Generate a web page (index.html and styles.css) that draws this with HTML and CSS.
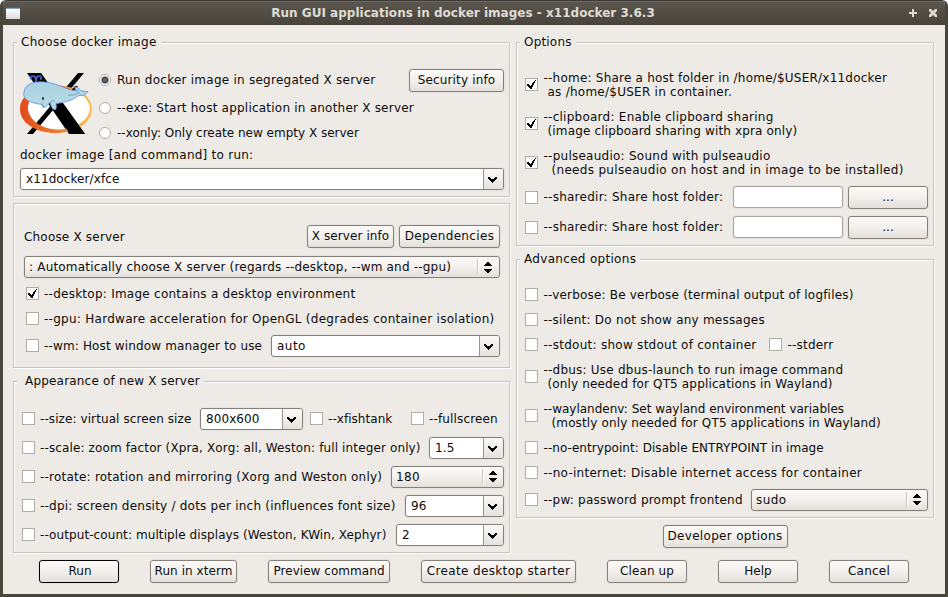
FILE: index.html
```html
<!DOCTYPE html>
<html lang="en">
<head>
<meta charset="utf-8">
<title>Run GUI applications in docker images - x11docker 3.6.3</title>
<link rel="stylesheet" href="styles.css">
</head>
<body>
<svg class="defs" aria-hidden="true">
  <symbol id="down" viewBox="0 0 9 6"><path d="M0 0h2v1h1v1h3V1h1V0h2v2H8v1H7v1H6v1H5v1H4V5H3V4H2V3H1V2H0z"/></symbol>
  <symbol id="updown" viewBox="0 0 8 11"><path d="M3 0h2v1h1v1h1v1h1v1H0V3h1V2h1V1h1zM0 7h8v1H7v1H6v1H5v1H3v-1H2V9H1V8H0z"/></symbol>
  <symbol id="tick" viewBox="0 0 9 9"><path d="M0 4h2v1h1v1h1V5h1V3h1V2h1V1h1V0h1v1H8v2H7v2H6v2H5v2H3V8H2V7H1V6H0z"/></symbol>
</svg>
<div class="window">
  <header class="titlebar">
    <span class="app-icon"></span>
    <h1 class="title">Run GUI applications in docker images - x11docker 3.6.3</h1>
    <svg class="win-btn" viewBox="0 0 8 8"><path d="M3 0h2v3h3v2H5v3H3V5H0V3h3z"/></svg>
    <svg class="win-btn" viewBox="0 0 8 8"><path d="M0 0h2l2 2 2-2h2v2L6 4l2 2v2H6L4 6 2 8H0V6l2-2-2-2z"/></svg>
  </header>
  <main class="columns">
    <div class="col-left">
      <section class="group g-image">
        <h2 class="legend t30">Choose docker image</h2>
        <div class="image-row">
          <svg class="logo" viewBox="0 0 72 64">
            <defs>
              <linearGradient id="ring" x1="0" x2="1"><stop offset="0" stop-color="#e2491b"/><stop offset=".5" stop-color="#ee7a2c"/><stop offset="1" stop-color="#fcc04f"/></linearGradient>
              <linearGradient id="skin" x1="0" x2="0" y1="0" y2="1"><stop offset="0" stop-color="#a9d1e2"/><stop offset="1" stop-color="#b9dde3"/></linearGradient>
            </defs>
            <ellipse cx="38" cy="36.500" rx="31" ry="21.500" fill="#fff"/>
            <path d="M7 1h14l44 61H49z"/>
            <path d="M58 1h6L13 62H7z"/>
            <path fill="url(#ring)" fill-rule="evenodd" d="M36 13.500c20 0 36 10 36 23.500S56 61 36 61 0 51 0 37s16-23.500 36-23.500zm2 2C21 15.500 8 25 8 36s13 21.500 30 21.500S70 48 70 36.500 55 15.500 38 15.500z"/>
            <path d="M38 31h5l22 31H50L34 39z"/>
            <path d="M48 22l7-8h3l-7 9z"/>
            <path fill="url(#skin)" stroke="#7195e9" stroke-width=".9" d="M4 20C5 11 16 8.500 28 10.500c11 1.500 19 8 30 8.500-1-1-4-2-3-4 3 0 5 3 7 4l6 .500c-2 3-5 4.500-9 4-7 5-14 7-23 8 0 2 1 5-1 6.500-3-1-4-4-5-7.500-2 1-3 5-7 5-1-1-1-2-1-3C11 31 2 28 4 20z"/>
            <path fill="none" stroke="#548caf" stroke-width=".7" d="M30 31c1-2 3-3 5-2M22 31l2 4M48 23c5 1 9-1 12-3"/>
            <path fill="none" stroke="#4c66dc" stroke-width="1.700" d="M16 10c0-4-1-6-3-6-3 0-3 3-1 3.500M16 10c0-4 1-6 3-6 3 0 3 3 1 3.500"/>
            <ellipse cx="23" cy="26.500" rx="1" ry="1.700" fill="#243c50"/>
          </svg>
          <div class="radios">
            <label class="radio"><i class="dot on"></i><span class="t25">Run docker image in segregated X server</span></label>
            <label class="radio"><i class="dot"></i><span class="t22">--exe: Start host application in another X server</span></label>
            <label class="radio r3"><i class="dot"></i><span class="t00">--xonly: Only create new empty X server</span></label>
          </div>
          <button class="btn w95 t15">Security info</button>
        </div>
        <div class="run-label"><span class="t25">docker image [and command] to run:</span></div>
        <div class="combo"><span class="t10">x11docker/xfce</span><b><svg><use href="#down"/></svg></b></div>
      </section>

      <section class="group g-server">
        <div class="server-row">
          <span class="grow t20">Choose X server</span>
          <button class="btn w87 t10">X server info</button>
          <button class="btn w101 t35">Dependencies</button>
        </div>
        <div class="select server"><span class="t20">: Automatically choose X server (regards --desktop, --wm and --gpu)</span><b><svg><use href="#updown"/></svg></b></div>
        <div class="opt h25"><i class="box"><svg><use href="#tick"/></svg></i><span class="grow t25">--desktop: Image contains a desktop environment</span></div>
        <div class="opt h25"><i class="box"></i><span class="grow t27">--gpu: Hardware acceleration for OpenGL (degrades container isolation)</span></div>
        <div class="opt h29"><i class="box"></i><span class="grow t15">--wm: Host window manager to use</span><div class="combo w229"><span class="t45">auto</span><b><svg><use href="#down"/></svg></b></div></div>
      </section>

      <section class="group g-look">
        <h2 class="legend wide t20">Appearance of new X server</h2>
        <div class="opt h29"><i class="box"></i><span class="size-label t10">--size: virtual screen size</span><div class="combo w103"><span class="t10">800x600</span><b><svg><use href="#down"/></svg></b></div><i class="box fish"></i><span class="fish-label">--xfishtank</span><i class="box"></i><span class="t15">--fullscreen</span></div>
        <div class="opt h29"><i class="box"></i><span class="grow t13">--scale: zoom factor (Xpra, Xorg: all, Weston: full integer only)</span><div class="combo w75"><span class="t10">1.5</span><b><svg><use href="#down"/></svg></b></div></div>
        <div class="opt h29"><i class="box"></i><span class="grow t22">--rotate: rotation and mirroring (Xorg and Weston only)</span><div class="select w113"><span class="t35">180</span><b><svg><use href="#updown"/></svg></b></div></div>
        <div class="opt h29"><i class="box"></i><span class="grow t22">--dpi: screen density / dots per inch (influences font size)</span><div class="combo w99"><span>96</span><b><svg><use href="#down"/></svg></b></div></div>
        <div class="opt h29"><i class="box"></i><span class="grow t10">--output-count: multiple displays (Weston, KWin, Xephyr)</span><div class="combo w108"><span>2</span><b><svg><use href="#down"/></svg></b></div></div>
      </section>
    </div>

    <div class="col-right">
      <section class="group g-options">
        <h2 class="legend t20">Options</h2>
        <div class="opt h39"><i class="box"><svg><use href="#tick"/></svg></i><p><span class="t22">--home: Share a host folder in /home/$USER/x11docker</span><span class="in1 t25">as /home/$USER in container.</span></p></div>
        <div class="opt h39"><i class="box"><svg><use href="#tick"/></svg></i><p><span class="t25">--clipboard: Enable clipboard sharing</span><span class="in1 t15">(image clipboard sharing with xpra only)</span></p></div>
        <div class="opt h39"><i class="box"><svg><use href="#tick"/></svg></i><p><span class="t25">--pulseaudio: Sound with pulseaudio</span><span class="in2 t30">(needs pulseaudio on host and in image to be installed)</span></p></div>
        <div class="opt h30"><i class="box"></i><span class="grow t25">--sharedir: Share host folder:</span><div class="field"></div><button class="btn w80">...</button></div>
        <div class="opt h30"><i class="box"></i><span class="grow t25">--sharedir: Share host folder:</span><div class="field"></div><button class="btn w80">...</button></div>
      </section>

      <section class="group g-advanced">
        <h2 class="legend t30">Advanced options</h2>
        <div class="opt h25"><i class="box"></i><span class="t20">--verbose: Be verbose (terminal output of logfiles)</span></div>
        <div class="opt h25"><i class="box"></i><span class="t22">--silent: Do not show any messages</span></div>
        <div class="opt h25"><i class="box"></i><span class="stdout-label t27">--stdout: show stdout of container</span><i class="box"></i><span class="t20">--stderr</span></div>
        <div class="opt h39"><i class="box"></i><p><span class="t22">--dbus: Use dbus-launch to run image command</span><span class="in1 t15">(only needed for QT5 applications in Wayland)</span></p></div>
        <div class="opt h39"><i class="box"></i><p><span class="t00">--waylandenv: Set wayland environment variables</span><span class="in2 t13">(mostly only needed for QT5 applications in Wayland)</span></p></div>
        <div class="opt h25"><i class="box"></i><span>--no-entrypoint: Disable ENTRYPOINT in image</span></div>
        <div class="opt h25"><i class="box"></i><span class="t27">--no-internet: Disable internet access for container</span></div>
        <div class="opt h29"><i class="box"></i><span class="grow t22">--pw: password prompt frontend</span><div class="select w177"><span class="t45">sudo</span><b><svg><use href="#updown"/></svg></b></div></div>
      </section>
      <button class="btn w125 developer t30">Developer options</button>
    </div>
  </main>
  <footer class="actions">
    <button class="btn w80 default">Run</button>
    <button class="btn w87">Run in xterm</button>
    <button class="btn w122">Preview command</button>
    <button class="btn w155 t35">Create desktop starter</button>
    <button class="btn w80 t10">Clean up</button>
    <button class="btn w80">Help</button>
    <button class="btn w80 t25">Cancel</button>
  </footer>
</div>
</body>
</html>
```
FILE: styles.css
```css
* { box-sizing: border-box; }
body {
  margin: 0;
  background: #fff;
  color: #0c0c0c;
  font: 12px/14px "DejaVu Sans", sans-serif;
  letter-spacing: 0.05px;
}
.defs { display: none; }
h1, h2, p { margin: 0; font-size: 12px; font-weight: normal; }
span { white-space: nowrap; }

.window {
  width: 948px;
  height: 597px;
  display: flex;
  flex-direction: column;
  background: #eeebe7;
  border: 3px solid #48453d;
  border-top: 0;
  border-radius: 6px 6px 0 0;
  overflow: hidden;
}
.titlebar {
  flex: none;
  height: 25px;
  margin: 0 -3px;
  padding: 0 11px 0 6px;
  display: flex;
  align-items: center;
  background: linear-gradient(#3c3b37 0, #3c3b37 1px, #6b6760 1px, #6b6760 2px, #5a564e 2px, #48443c 25px);
}
.app-icon {
  width: 14px;
  height: 12px;
  background: linear-gradient(#3867a5 0, #3867a5 1px, #83a3cd 1px, #83a3cd 2px, #fff 2px, #dcdcda 12px);
}
.title {
  flex: 1;
  padding-left: 9px;
  text-align: center;
  font-weight: bold;
  line-height: 24px;
  letter-spacing: 0.02px;
  color: #dfdbd2;
}
.win-btn { width: 8px; height: 8px; margin: 1px 0 0 12px; fill: #dfdbd2; }

.columns { display: flex; gap: 6px; padding: 17px 11px 0 10px; height: 531px; }
.col-left { width: 497px; flex: none; }
.col-right { width: 418px; flex: none; }

/* Etched frames with a title set into the top edge */
.group {
  display: flow-root;
  padding: 0 5px 0 6px;
  border: 1px solid #c6c3c0;
  box-shadow: inset 1px 1px #fff, 1px 1px #fff;
}
.legend {
  width: fit-content;
  height: 14px;
  margin: -8px 0 0 -3px;
  padding: 0 4px;
  background: #eeebe7;
}
.legend.wide { padding-left: 8px; }

.g-image { height: 155px; margin-bottom: 6px; }
.g-server { height: 165px; margin-bottom: 13px; padding: 21px 9px 0 10px; }
.g-look { height: 172px; padding-left: 8px; }
.g-options { height: 204px; margin-bottom: 13px; padding-left: 8px; }
.g-advanced { height: 259px; margin-bottom: 7px; padding-left: 8px; }
.g-look .legend,
.g-options .legend,
.g-advanced .legend { margin-left: -5px; margin-bottom: 16px; }

.image-row { display: flex; height: 93px; padding-top: 17px; }
.logo { width: 72px; height: 64px; margin-top: 6px; flex: none; }
.radios { flex: 1; min-width: 0; padding-left: 7px; }
.radio { display: flex; align-items: center; height: 28px; gap: 6px; }
.radio.r3 { height: 22px; }
.dot {
  flex: none;
  width: 12px;
  height: 12px;
  border: 1px solid #b3aca4;
  border-radius: 50%;
  background: #fff;
}
.dot.on { background: radial-gradient(#5c6064 0 2px, #32383c 3px, #fff 4px); }
.image-row .btn { margin-top: 3px; }
.run-label { height: 26px; padding-top: 6px; }

.server-row { display: flex; gap: 5px; height: 31px; }
.server-row span { padding-top: 5px; }
.grow { flex: 1; }

.opt { display: flex; align-items: center; }
.h25 { height: 25px; }
.h29 { height: 29px; }
.h30 { height: 30px; }
.h39 { height: 39px; }
.opt p > span { display: block; }
.in1 { padding-left: 4px; }
.in2 { padding-left: 8px; }
.g-server .opt { padding-left: 2px; }
.box {
  flex: none;
  width: 13px;
  height: 13px;
  margin-right: 5px;
  padding: 1px;
  border: 1px solid #b0aca7;
  background: #fff;
}
.col-right .box { margin-right: 5.5px; }
.box svg { display: block; width: 9px; height: 9px; }
.size-label { width: 160px; }
.box.fish { margin-left: 7px; }
.fish-label { width: 83px; }
.stdout-label { width: 225.5px; }

.btn {
  flex: none;
  height: 23px;
  padding: 0 0 1px;
  border: 1px solid #85807a;
  border-radius: 3px;
  background: linear-gradient(#fcfaf8, #f3f0ed 50%, #e4dfda);
  box-shadow: 0 0 0 1px #e7e3df;
  color: inherit;
  font: inherit;
}
.btn:not([class*=" t"]) { letter-spacing: inherit; }
.btn.default { border-color: #000; padding-left: 2px; }

.combo, .select {
  flex: none;
  display: flex;
  height: 22px;
  border: 1px solid #85807a;
  border-radius: 3px;
  background: #fff;
  box-shadow: 0 0 0 1px #e7e3df;
  line-height: 20px;
}
.combo > span { flex: 1; padding-left: 5px; }
.select > span { flex: 1; padding-left: 4px; }
.combo b, .select b { display: flex; align-items: center; justify-content: center; }
.combo b {
  width: 20px;
  border-left: 1px solid #99948f;
  border-radius: 0 2px 2px 0;
  background: linear-gradient(#fbf9f8, #e6e1dc);
  padding: 2px 2px 0 0;
}
.select { background: linear-gradient(#fcfaf8, #f3f0ed 50%, #e4dfda); }
.select b { width: 21px; margin: 2px 0; border-left: 1px solid #c9c5c1; box-shadow: inset 1px 0 #fff; padding-right: 1px; }
.select.server { margin-bottom: 3px; }
.select.server b { width: 22px; padding-right: 2px; }
.combo svg { width: 9px; height: 6px; }
.select svg { width: 8px; height: 11px; }

.field {
  width: 110px;
  height: 22px;
  margin-right: 5px;
  border: 1px solid #a8a29d;
  border-radius: 3px;
  background: #fff;
  box-shadow: 0 0 0 1px #e7e3df;
}

/* Tracking steps */
.t00 { letter-spacing: 0; }
.t10 { letter-spacing: 0.09px; }
.t13 { letter-spacing: 0.13px; }
.t15 { letter-spacing: 0.15px; }
.t20 { letter-spacing: 0.19px; }
.t22 { letter-spacing: 0.22px; }
.t25 { letter-spacing: 0.25px; }
.t27 { letter-spacing: 0.27px; }
.t30 { letter-spacing: 0.31px; }
.t35 { letter-spacing: 0.36px; }
.t45 { letter-spacing: 0.46px; }

/* Control widths */
.w75 { width: 75px; }
.w80 { width: 80px; }
.w87 { width: 87px; }
.w95 { width: 95px; }
.w99 { width: 99px; }
.w101 { width: 101px; }
.w103 { width: 103px; }
.w108 { width: 108px; }
.w113 { width: 113px; }
.w122 { width: 122px; }
.w125 { width: 125px; }
.w155 { width: 155px; }
.w177 { width: 177px; }
.w229 { width: 229px; }

.developer { display: block; margin: 0 auto; }
.actions { display: flex; gap: 31px; padding: 4px 0 0 36px; }
```
